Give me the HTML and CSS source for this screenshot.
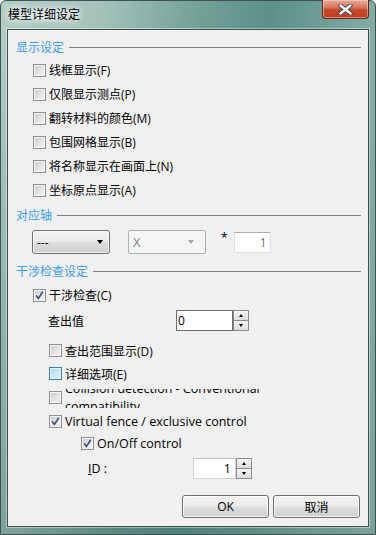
FILE: index.html
```html
<!DOCTYPE html>
<html lang="zh-CN">
<head>
  <meta charset="UTF-8" />
  <title>模型详细设定</title>
  <link rel="stylesheet" href="styles.css">
</head>
<body>
  <div class="window">
    <div class="titlebar">
      <span class="title">模型详细设定</span>
      <div class="close">
        <svg width="15" height="11" viewBox="0 0 15 11">
          <path d="M2.5 1.5 L12.5 9.5 M12.5 1.5 L2.5 9.5" stroke="#3a3f4a" stroke-width="4.2" stroke-linecap="round"/>
          <path d="M2.5 1.5 L12.5 9.5 M12.5 1.5 L2.5 9.5" stroke="#fff" stroke-width="2.4" stroke-linecap="round"/>
        </svg>
      </div>
    </div>

    <div class="client">
      <div class="group-head"><span>显示设定</span><i class="rule"></i></div>
      <div class="checks indent-a">
        <div class="check"><span class="box"></span>线框显示(F)</div>
        <div class="check"><span class="box"></span>仅限显示测点(P)</div>
        <div class="check"><span class="box"></span>翻转材料的颜色(M)</div>
        <div class="check"><span class="box"></span>包围网格显示(B)</div>
        <div class="check"><span class="box"></span>将名称显示在画面上(N)</div>
        <div class="check"><span class="box"></span>坐标原点显示(A)</div>
      </div>

      <div class="group-head head-axis"><span>对应轴</span><i class="rule"></i></div>
      <div class="axis-row">
        <div class="combo"><span>---</span><i class="arrow"></i></div>
        <div class="combo disabled"><span>X</span><i class="arrow"></i></div>
        <span class="star">*</span>
        <div class="textbox">1</div>
      </div>

      <div class="group-head head-coll"><span>干涉检查设定</span><i class="rule"></i></div>
      <div class="check indent-a row-main">
        <span class="box"><svg width="9" height="9" viewBox="0 0 9 9"><path d="M1.2 4.6 L3.4 7.4 L7.8 0.8" fill="none" stroke="#3b4d82" stroke-width="1.6"/></svg></span>干涉检查(C)
      </div>
      <div class="value-row">
        <span class="value-label">查出值</span>
        <div class="spin">
          <div class="spin-field">0</div>
          <div class="spin-btns"><span class="up"></span><span class="down"></span></div>
        </div>
      </div>
      <div class="check indent-b row-range"><span class="box"></span>查出范围显示(D)</div>
      <div class="check indent-b row-detail"><span class="box hot"></span>详细选项(E)</div>
      <div class="check indent-b latin"><span class="box"></span><div class="clip"><span>Collision detection - Conventional compatibility</span></div></div>
      <div class="check indent-b latin">
        <span class="box"><svg width="9" height="9" viewBox="0 0 9 9"><path d="M1.2 4.6 L3.4 7.4 L7.8 0.8" fill="none" stroke="#3b4d82" stroke-width="1.6"/></svg></span>Virtual fence / exclusive control
      </div>
      <div class="check indent-c row-onoff latin">
        <span class="box"><svg width="9" height="9" viewBox="0 0 9 9"><path d="M1.2 4.6 L3.4 7.4 L7.8 0.8" fill="none" stroke="#3b4d82" stroke-width="1.6"/></svg></span>On/Off control
      </div>
      <div class="id-row latin">
        <span class="id-label"><u>I</u>D :</span>
        <div class="spin">
          <div class="spin-field light">1</div>
          <div class="spin-btns"><span class="up"></span><span class="down"></span></div>
        </div>
      </div>

      <div class="buttons">
        <button class="btn">OK</button>
        <button class="btn">取消</button>
      </div>
    </div>
  </div>
</body>
</html>
```
FILE: styles.css
```css
* { box-sizing: border-box; }

body {
  margin: 0;
  background: #fff;
  font-family: "Open Sans", "Noto Sans CJK SC", sans-serif;
  font-size: 12px;
  color: #000;
}

/* window frame */
.window {
  width: 376px;
  height: 535px;
  padding: 0 6px 7px;
  display: flex;
  flex-direction: column;
  border: 1px solid #3d5350;
  border-radius: 6px 6px 0 0;
  background:
    linear-gradient(to bottom, rgba(255, 255, 255, 0) 40px, rgba(50, 100, 92, 0.35) 100%),
    linear-gradient(100deg, #b3ccc6 0%, #a4c2ba 22%, #74a198 42%, #5b9088 58%, #82aba2 80%, #a3c1b9 100%);
}

.titlebar {
  height: 28px;
  display: flex;
  align-items: flex-start;
}

.title {
  margin: 6px 0 0 1px;
  line-height: 16px;
  padding: 0 4px 0 0;
  color: #000;
  text-shadow: 0 0 6px #fff, 0 0 10px #fff;
  background: radial-gradient(ellipse at center, rgba(255, 255, 255, 0.55), rgba(255, 255, 255, 0) 70%);
}

.close {
  margin-left: auto;
  width: 47px;
  height: 19px;
  margin-top: -1px;
  display: flex;
  align-items: center;
  justify-content: center;
  border: 1px solid #5b2a20;
  border-top: 0;
  border-radius: 0 0 4px 4px;
  background: linear-gradient(#e9a898 0%, #d77a63 40%, #c8472a 55%, #c23b1d 100%);
  box-shadow: inset 0 0 0 1px rgba(255, 220, 210, 0.5);
}

/* client area */
.client {
  flex: 1;
  display: flex;
  flex-direction: column;
  border: 1px solid #3e4f4c;
  box-shadow: 0 0 0 1px rgba(255, 255, 255, 0.4);
  background: #f0f0f0;
  padding: 9px 7px 8px 8px;
}

.group-head {
  display: flex;
  align-items: center;
  height: 16px;
  color: #3c9cf2;
}

.rule {
  flex: 1;
  height: 1px;
  margin: 0 0 0 5px;
  background: #7f7f7f;
}

.head-axis { margin-top: 5px; }
.head-coll { margin-top: 9px; }

.checks { margin-top: 3px; }

.indent-a { margin-left: 17px; }
.indent-b { margin-left: 33px; }
.indent-c { margin-left: 65px; }

.latin { font-size: 12.5px; }

.check {
  display: flex;
  align-items: center;
  height: 24px;
}

.box {
  width: 13px;
  height: 13px;
  margin-right: 3px;
  flex: none;
  display: flex;
  align-items: center;
  justify-content: center;
  border: 1px solid #8e8f8f;
  box-shadow: inset 0 0 0 1px #f4f4f4;
  background: linear-gradient(135deg, #c6c8ca 0%, #e4e4e4 55%, #f6f6f6 100%);
}

.box.hot {
  border-color: #3c7fb1;
  box-shadow: inset 0 0 0 1px #def9fa;
  background: linear-gradient(135deg, #a9d8f5 0%, #c9e9fb 55%, #e8f6fd 100%);
}

.row-main { margin-top: 4px; }
.row-range { margin-top: 8px; height: 23px; }
.row-detail { height: 23px; }
.row-onoff { height: 20px; }

/* label squeezed into a box too short for its two lines */
.clip {
  width: 205px;
  height: 19px;
  margin-top: 2px;
  overflow: hidden;
  display: flex;
  align-items: center;
  line-height: 18px;
}

/* axis row */
.axis-row {
  display: flex;
  align-items: center;
  margin: 7px 0 0 16px;
  height: 24px;
}

.combo {
  width: 78px;
  height: 24px;
  display: flex;
  align-items: center;
  padding: 0 6px 0 4px;
  border: 1px solid #707070;
  border-radius: 3px;
  background: linear-gradient(#f2f2f2 0%, #ebebeb 45%, #dddddd 55%, #cfcfcf 100%);
  box-shadow: inset 0 0 0 1px rgba(255, 255, 255, 0.7);
}

.combo span { flex: 1; }

.arrow {
  width: 0;
  height: 0;
  border-left: 3.5px solid transparent;
  border-right: 3.5px solid transparent;
  border-top: 4px solid #000;
}

.combo.disabled {
  margin-left: 18px;
  border-color: #adb2b5;
  border-radius: 2px;
  background: #f4f4f4;
  box-shadow: none;
  color: #838383;
  font-size: 13px;
  padding-right: 11px;
}

.combo.disabled .arrow { border-top-color: #a6a6a6; }

.star {
  align-self: flex-start;
  margin: 1px 6px 0 15px;
  line-height: 14px;
}

.textbox {
  width: 37px;
  height: 21px;
  padding-right: 3px;
  text-align: right;
  line-height: 19px;
  color: #6d6d6d;
  background: #fff;
  border: 1px solid #dbdfe6;
  border-top-color: #abadb3;
}

/* spin inputs */
.value-row {
  display: flex;
  align-items: center;
  margin: 3px 0 0 32px;
  height: 21px;
}

.value-label { width: 128px; }

.id-row {
  display: flex;
  align-items: center;
  margin: 5px 0 0 72px;
  height: 20px;
}

.id-label { width: 105px; }

.spin {
  display: flex;
  height: 21px;
}

.spin-field {
  width: 57px;
  padding-left: 1px;
  line-height: 19px;
  background: #fff;
  border: 1px solid #6c6c6c;
}

.spin-field.light {
  width: 43px;
  padding: 0 4px 0 0;
  text-align: right;
  border-color: #d4d4d4;
  border-top-color: #c2c2c2;
}

.spin-btns {
  width: 16px;
  display: flex;
  flex-direction: column;
}

.spin-btns span {
  flex: 1;
  display: flex;
  align-items: center;
  justify-content: center;
  border: 1px solid #8c8c8c;
  background: linear-gradient(#f6f6f6, #dcdcdc);
}

.spin-btns .down { border-top: 0; }

.spin-btns .up::after,
.spin-btns .down::after {
  content: "";
  border-left: 2.5px solid transparent;
  border-right: 2.5px solid transparent;
}

.spin-btns .up::after { border-bottom: 3px solid #000; }
.spin-btns .down::after { border-top: 3px solid #000; }

/* dialog buttons */
.buttons {
  margin-top: auto;
  display: flex;
  justify-content: flex-end;
  gap: 4px;
  padding-right: 1px;
}

.btn {
  width: 87px;
  height: 23px;
  font: inherit;
  color: #000;
  border: 1px solid #707070;
  border-radius: 3px;
  background: linear-gradient(#f2f2f2 0%, #ebebeb 45%, #dddddd 55%, #cfcfcf 100%);
  box-shadow: inset 0 0 0 1px rgba(255, 255, 255, 0.75);
}
```
